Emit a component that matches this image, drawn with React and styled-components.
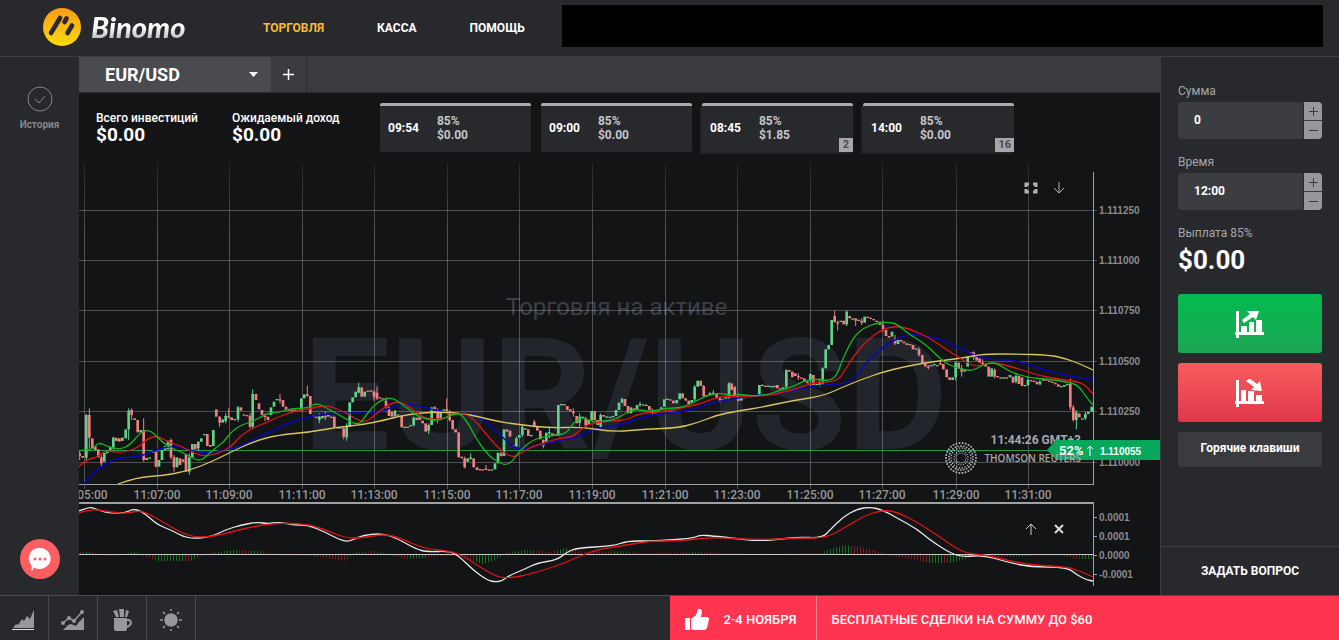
import React, { useState } from "react";
import styled, { createGlobalStyle, css } from "styled-components";

const GlobalStyle = createGlobalStyle`
  * {
    box-sizing: border-box;
  }
  body {
    margin: 0;
    background: #131416;
    color: #fff;
    font-family: Roboto, "Liberation Sans", sans-serif;
    font-size: 12px;
    line-height: 14px;
  }
  button, input {
    margin: 0;
    padding: 0;
    border: 0;
    color: inherit;
    font: inherit;
  }
  button {
    background: none;
    cursor: pointer;
  }
  a {
    color: inherit;
    text-decoration: none;
  }
  svg {
    display: block;
  }
`;

const Page = styled.div`
  min-height: 100vh;
  display: flex;
  flex-direction: column;
`;

const Header = styled.header`
  display: flex;
  align-items: center;
  height: 57px;
  padding: 0 16px 4px 43px;
  background: #28292c;
  border-bottom: 1px solid #3c3d40;
`;

const Logo = styled.a`
  display: flex;
  align-items: center;
  gap: 10px;
  width: 220px;
  padding-top: 2px;
`;

const LogoText = styled.span`
  font-family: Lato, sans-serif;
  font-size: 29px;
  line-height: 36px;
  font-weight: 900;
  font-style: italic;
  background: linear-gradient(#fff 50%, #b4b6ba 85%);
  background-clip: text;
  color: transparent;
`;

const Nav = styled.nav`
  display: flex;
  gap: 53px;
  margin-right: 37px;
  padding-top: 3px;
`;

const NavItem = styled.a`
  font-weight: 700;
  color: ${(props) => (props.$active ? "#f7bd2e" : "#fff")};
`;

const Account = styled.div`
  flex: 1;
  height: 42px;
  background: #000;
`;

const Body = styled.main`
  flex: 1;
  display: flex;
`;

const Sidebar = styled.aside`
  width: 79px;
  display: flex;
  flex-direction: column;
  justify-content: space-between;
  align-items: center;
  padding: 29px 0 16px;
  background: #28292c;
`;

const SideButton = styled.button`
  display: flex;
  flex-direction: column;
  align-items: center;
  gap: 6px;
  font-size: 10px;
  font-weight: 700;
  color: #85868a;
`;

const ChatButton = styled.button`
  width: 40px;
  height: 40px;
  display: grid;
  place-items: center;
  border-radius: 50%;
  background: #fb5f61;
`;

const Center = styled.section`
  flex: 1;
  min-width: 0;
  background: #131416;
`;

const Tabs = styled.div`
  display: flex;
  height: 36px;
  background: #3a3b3e;
  border-bottom: 1px solid #2c2d30;
`;

const AssetTab = styled.button`
  display: flex;
  align-items: center;
  justify-content: space-between;
  width: 192px;
  padding: 0 13px 0 26px;
  background: #4a4b4e;
  font-size: 18px;
  font-weight: 700;
`;

const AddTab = styled.button`
  display: grid;
  place-items: center;
  width: 36px;
  border-right: 1px solid #2a2b2e;
`;

const Summary = styled.div`
  display: flex;
  align-items: flex-start;
  padding: 10px 17px 8px;
`;

const Stat = styled.div`
  width: ${(props) => props.$width}px;
  padding-top: 8px;
`;

const StatLabel = styled.div`
  font-weight: 500;
`;

const StatValue = styled.div`
  font-size: 19px;
  line-height: 20px;
  font-weight: 700;
`;

const Deals = styled.div`
  display: flex;
  gap: 10px;
`;

const Deal = styled.button`
  position: relative;
  display: flex;
  align-items: center;
  gap: 18px;
  width: 151px;
  height: 49px;
  padding: 0 0 2px 8px;
  background: #28292c;
  border-top: 3px solid #a9abaf;
  border-radius: 2px;
  text-align: left;
  font-weight: 700;
  ${(props) =>
    props.$stacked &&
    css`
      box-shadow: -2px 2px 0 #222326;
    `}
`;

const DealInfo = styled.span`
  color: #c4c5c8;
`;

const DealCount = styled.span`
  position: absolute;
  right: 0;
  bottom: 0;
  min-width: 14px;
  padding: 0 3px;
  background: #a6a7aa;
  color: #4a4b4e;
  font-size: 11px;
  text-align: center;
`;

const ChartBox = styled.div`
  position: relative;
`;

const ChartTools = styled.div`
  position: absolute;
  top: ${(props) => props.$top};
  right: 8.6%;
  display: flex;
  gap: 12px;
`;

const ToolButton = styled.button`
  display: grid;
  place-items: center;
  width: 16px;
  height: 16px;
`;

const Panel = styled.aside`
  width: 179px;
  display: flex;
  flex-direction: column;
  background: #28292c;
  border-left: 1px solid #3c3d40;
`;

const Form = styled.form`
  flex: 1;
  display: flex;
  flex-direction: column;
  padding: 27px 17px 0;
`;

const Label = styled.label`
  margin-bottom: 4px;
  color: #a6a7aa;
`;

const Field = styled.div`
  display: flex;
  height: 37px;
  margin-bottom: 16px;
  border-radius: 4px;
  overflow: hidden;
  background: #3c3d41;
`;

const TextInput = styled.input`
  flex: 1;
  min-width: 0;
  padding: 0 16px 2px;
  background: transparent;
  font-weight: 700;
`;

const Steps = styled.div`
  width: 19px;
  display: grid;
  gap: 1px;
  border-left: 1px solid #28292c;
`;

const Step = styled.button`
  display: grid;
  place-items: center;
  background: #97989b;
`;

const Payout = styled.div`
  margin: 2px 0 20px;
  font-size: 26px;
  line-height: 28px;
  font-weight: 700;
`;

const TradeButton = styled.button`
  height: 59px;
  margin-bottom: 10px;
  display: grid;
  place-items: center;
  border-radius: 3px;
  background: ${(props) =>
    props.$up
      ? "linear-gradient(#04bb4e, #1ca653)"
      : "linear-gradient(#f75d5d, #e0364b)"};
`;

const KeysButton = styled.button`
  height: 35px;
  padding-bottom: 4px;
  border-radius: 3px;
  background: #3a3b3e;
  font-weight: 700;
`;

const AskButton = styled.button`
  height: 49px;
  border-top: 1px solid #3c3d40;
  font-weight: 700;
`;

const Footer = styled.footer`
  display: flex;
  justify-content: space-between;
  height: 45px;
  background: #28292c;
  border-top: 1px solid #4a4b4e;
`;

const FooterTools = styled.div`
  display: flex;
`;

const FooterButton = styled.button`
  width: 49px;
  display: grid;
  place-items: center;
  padding-top: 4px;
  border-right: 1px solid #4a4b4e;
`;

const Promo = styled.a`
  flex: 0 0 50%;
  display: flex;
  align-items: center;
  background: #ff344f;
  font-size: 13px;
  font-weight: 500;
`;

const PromoDate = styled.span`
  display: flex;
  align-items: center;
  gap: 15px;
  width: 147px;
  height: 44px;
  padding: 4px 0 0 15px;
  border-right: 1px solid #ff8190;
`;

const PromoText = styled.span`
  padding: 4px 15px 0;
`;

const deals = [
  { time: "09:54", sum: "$0.00" },
  { time: "09:00", sum: "$0.00" },
  { time: "08:45", sum: "$1.85", count: 2 },
  { time: "14:00", sum: "$0.00", count: 16 },
];

const timeMarks = [
  [84, "11:05:00"], [157, "11:07:00"], [229, "11:09:00"], [302, "11:11:00"],
  [374, "11:13:00"], [447, "11:15:00"], [519, "11:17:00"], [592, "11:19:00"],
  [665, "11:21:00"], [737, "11:23:00"], [810, "11:25:00"], [882, "11:27:00"],
  [956, "11:29:00"], [1028, "11:31:00"],
];

const priceMarks = [
  [210, "1.111250"], [260, "1.111000"], [310, "1.110750"],
  [361, "1.110500"], [411, "1.110250"], [462, "1.110000"],
];

const macdMarks = [
  [517, "0.0001"], [536, "0.0001"], [555, "0.0000"], [574, "-0.0001"],
];

// each bar: offset, open, close, in thirds of a unit from the block's origin
const candleBlocks = [
  {
    x: 78,
    y: 370,
    bars:
      "5 250 258,14 258 263,25 263 135,34 135 203,43 205 235,52 230 240,61 238 262,70 262 280,79 275 248,88 250 240,97 240 230,106 232 203,115 203 213,124 205 215,133 213 203,143 205 178,152 178 122,161 120 135,170 145 150,179 150 187,188 187 180,197 180 270,206 270 264,215 264 262,225 243 248,234 247 290,243 290 270,252 270 240,261 240 228,270 238 212,279 210 262,288 262 292,297 292 262,306 265 285,315 268 275,324 253 305,334 305 262,343 262 222,352 222 238,361 235 215,370 215 205,379 195 192,388 192 228,397 225 230,406 228 180,415 118 140,425 140 158,434 158 148,443 153 138,452 138 141,461 142 150,470 150 147,480 148 112,489 112 122,498 133 137,507 135 138,516 138 170,524 170 72,534 72 90,543 100 118,552 120 135,561 137 140,570 140 150,579 135 112,588 110 95,597 90 87,606 88 92,615 90 110,624 110 118,633 118 121,642 119 122,652 122 119,661 120 122,670 122 85,679 85 73,688 73 78,697 78 132,706 137 140,715 140 142,724 150 140,733 145 138,742 138 142,751 140 135,760 140 143,769 140 172,779 172 175,788 175 172,797 175 200,806 202 170,815 170 97,824 97 82,833 82 65,842 68 52,851 52 80,860 80 65,870 62 64,879 64 61,888 65 80,897 68 85,906 82 86,915 85 90,924 92 110,933 110 138,942 125 140,951 138 122,960 133 136",
    wicks:
      "5 240 270,25 132 270,34 115 235,70 255 288,106 200 240,152 115 210,161 115 150,197 145 275,234 240 292,279 205 268,288 255 305,334 250 314,361 215 245,425 140 170,443 130 160,452 115 145,480 108 155,516 130 175,524 58 175,561 130 153,606 72 100,688 47 80,724 130 160,742 125 150,797 170 208,806 160 212,842 38 70,888 60 92,897 50 90,924 82 120,951 120 145",
  },
  {
    x: 400,
    y: 370,
    bars:
      "5 137 172,14 172 170,23 170 173,32 168 165,41 165 143,50 143 150,59 142 150,68 152 160,77 160 185,86 182 165,95 165 112,104 112 122,113 122 150,122 148 122,131 122 118,140 118 125,149 125 150,158 150 178,167 178 187,176 187 262,185 260 265,194 265 292,203 275 265,212 265 262,221 265 292,231 292 300,240 297 300,249 298 301,258 296 299,267 298 300,276 302 298,285 298 280,294 280 248,303 250 258,312 258 178,321 178 185,330 182 200,340 225 230,349 230 205,358 203 195,367 195 172,376 175 178,385 178 198,394 198 195,403 155 170,412 170 182,421 182 208,430 210 228,439 215 188,448 188 186,457 190 195,466 192 197,475 197 105,484 105 102,493 102 105,502 108 120,511 118 125,520 125 130,530 138 160,539 158 140,548 142 140,557 145 165,566 165 150,575 150 123,584 123 150,593 150 165,602 170 135,611 135 140,620 142 139,630 142 140,639 140 138,648 138 120,657 120 98,666 98 87,675 87 108,684 108 130,693 130 112,702 115 120,711 118 105,720 105 102,730 103 106,739 106 104,748 108 120,757 122 130,766 130 125,775 125 122,784 118 112,793 110 88,802 88 86,811 88 92,820 92 100,830 100 90,839 88 70,848 70 85,857 85 92,866 92 103,875 98 90,884 88 50,893 50 32,902 32 48,911 48 78,920 75 78,930 75 68,940 68 71,950 72 85,960 85 92,969 88 90,978 85 82,987 82 40",
    wicks:
      "41 140 170,86 160 192,104 108 128,113 115 160,140 85 130,149 120 155,194 260 295,212 250 270,258 285 300,303 245 260,349 200 235,367 162 200,403 150 172,430 208 235,448 170 205,520 115 140,539 130 170,557 140 172,602 130 175,666 83 100,720 95 110,757 115 133,884 45 95,911 45 82,940 60 75,960 80 98,987 36 90",
  },
  {
    x: 730,
    y: 290,
    bars:
      "5 280 300,14 290 318,25 320 332,34 332 320,43 320 325,52 322 318,61 318 320,70 320 317,79 318 315,88 315 285,97 287 284,106 287 289,115 290 287,124 290 288,133 287 292,142 285 295,151 295 298,160 298 292,169 290 240,178 240 245,187 245 262,196 250 258,205 258 262,214 262 265,223 265 275,232 275 280,241 268 252,250 255 285,260 285 282,269 285 280,278 280 235,287 235 178,296 178 165,305 165 90,314 78 97,323 97 100,332 95 92,341 92 103,350 103 65,359 78 85,368 88 85,377 85 92,386 92 89,395 92 98,404 98 80,413 80 83,422 83 87,431 87 90,440 92 95,450 95 105,459 105 120,468 120 138,477 138 143,486 140 125,495 145 160,504 162 150,513 150 155,522 155 160,531 160 165,540 162 165,549 165 178,558 178 175,567 178 195,577 195 220,586 220 230,595 230 233,604 228 225,613 225 222,622 225 228,631 220 222,640 222 238,650 238 262,659 262 270,668 270 262,677 262 218,686 218 235,695 235 245,704 245 238,713 230 200,722 187 190,731 187 200,740 200 212,749 205 218,758 218 222,767 225 230,776 230 260,785 260 235,794 240 260,803 258 262,812 262 265,821 265 262,830 262 265,840 262 255,849 260 278,858 275 258,867 258 282,876 262 288,885 288 285,894 285 270,903 270 272,912 272 275,921 275 283,930 283 275,940 272 265,949 268 272,958 272 275,967 275 278,976 278 283,985 283 290,994 290 288,1003 290 285,1012 285 282,1021 282 352,1030 352 390,1039 390 367,1048 370 382,1057 385 388,1066 385 372,1075 372 365,1085 365 350",
    wicks:
      "25 310 335,169 238 298,205 250 270,241 250 290,269 265 290,278 232 285,314 62 95,323 92 122,350 62 108,377 85 108,395 85 105,459 92 125,495 135 165,567 172 200,595 225 238,631 212 225,677 215 272,695 225 260,731 184 210,758 208 225,794 235 265,858 250 280,894 260 288,930 270 286,1021 265 360,1030 345 395,1039 360 418,1066 365 390",
  },
];

const averages = [
  {
    color: "#0808b4",
    width: 1.6,
    points:
      "84,484 93,472 105,465 115,458 138,457 151,452 168,446 181,447 195,452 211,453 228,449 241,447 258,437 275,430 291,422 311,416 338,413 355,413 375,413 391,408 401,404 417,405 433,410 457,414 473,414 487,422 500,435 513,447 522,449 533,447 547,443 567,439 580,437 592,429 603,428 627,423 643,417 667,413 690,411 710,403 733,399 750,396 780,393 800,389 820,385 847,384 857,375 867,362 883,347 897,338 913,334 930,337 943,340 963,350 980,358 997,360 1013,360 1030,365 1050,372 1070,376 1093,380",
  },
  {
    color: "#d9c35c",
    points:
      "118,484 138,477 161,476 188,471 211,462 231,452 255,441 278,435 311,432 338,427 361,425 385,420 400,416 420,413 440,412 460,413 480,417 500,422 523,425 550,428 583,427 613,432 647,429 677,428 697,423 717,415 738,411 763,407 790,401 823,396 843,387 863,379 883,372 903,367 930,362 963,358 983,354 1013,354 1050,355 1067,359 1080,364 1093,370",
  },
  {
    color: "#e01414",
    points:
      "78,468 85,460 98,457 105,450 121,453 138,448 148,438 158,436 168,442 181,446 191,452 206,457 221,452 231,447 241,435 255,427 268,422 278,417 295,411 308,409 325,405 341,410 361,422 368,421 378,412 391,403 401,402 410,407 423,418 440,420 460,412 472,417 487,435 500,450 513,458 523,452 533,446 547,442 560,438 573,437 583,427 593,423 610,421 627,420 640,413 663,412 690,406 703,403 717,397 733,396 767,396 783,392 800,388 813,382 837,382 845,370 853,357 867,340 883,329 897,326 910,329 930,338 947,350 963,360 975,367 993,362 1013,367 1037,375 1057,379 1080,382 1087,387 1093,394",
  },
  {
    color: "#12b81c",
    points:
      "78,451 85,450 93,449 98,443 103,444 111,448 121,449 130,445 140,433 146,430 153,432 165,445 181,452 191,457 199,461 206,457 215,448 223,443 231,432 241,425 251,422 261,417 268,413 278,413 288,409 308,408 316,403 325,407 341,416 358,426 365,417 373,406 383,399 393,398 400,403 410,410 420,418 440,421 450,415 460,413 468,423 478,442 490,457 500,463 505,465 512,462 520,450 533,440 543,437 557,435 567,433 573,423 582,417 590,421 600,422 617,419 627,412 637,409 650,412 667,408 680,408 693,403 707,395 720,393 733,396 740,394 750,396 767,395 780,390 793,387 803,381 817,379 830,381 837,375 843,358 853,338 863,328 877,323 888,322 897,324 910,335 927,345 943,362 957,368 970,371 978,368 987,363 997,363 1010,372 1030,378 1047,379 1067,382 1078,385 1087,398 1093,405",
  },
  {
    color: "#e8e8e8",
    points:
      "78,511 85,509 91,507 98,510 108,513 125,513 133,509 141,511 150,518 158,525 171,530 188,539 211,537 225,530 241,525 258,522 268,524 278,522 295,525 308,525 325,532 346,543 358,537 371,534 385,534 398,539 416,549 427,552 450,551 460,557 473,570 487,580 495,582 502,581 510,575 523,570 537,563 557,560 567,552 577,548 613,546 627,541 650,541 673,540 693,538 700,535 713,536 733,538 757,541 783,539 797,537 822,538 830,530 843,517 857,509 870,507 883,510 897,518 917,529 930,540 950,553 963,557 983,555 1007,562 1030,567 1067,567 1077,575 1087,580 1093,581",
  },
  {
    color: "#e01414",
    points:
      "78,513 91,509 105,511 125,514 141,510 158,519 178,531 193,537 211,537 231,532 251,527 275,523 305,524 321,528 345,538 361,538 385,534 400,538 425,549 450,551 463,556 480,567 497,577 510,578 527,575 550,568 567,562 580,556 600,549 627,545 650,541 680,541 713,537 757,540 800,538 825,538 843,529 863,516 883,510 897,512 917,522 937,535 957,549 970,554 987,555 1010,561 1033,565 1067,567 1080,571 1093,577",
  },
];

const histogram = [
  [78, 2], [90, 2], [100, 0], [110, -1], [128, 1], [135, 3], [142, -1],
  [158, -6], [190, -6], [200, -1], [215, 2], [235, 4], [258, 3], [275, 0],
  [310, -1], [345, -6], [352, 1], [370, 3], [390, 0], [405, -4], [425, -3],
  [440, -1], [460, -1], [470, -5], [482, -9], [495, -5], [505, 1], [525, 4],
  [550, 2], [565, 6], [585, 2], [620, 3], [640, 1], [700, 2], [760, 0],
  [820, 1], [830, 5], [845, 9], [860, 7], [880, 2], [890, -1], [910, -4],
  [930, -8], [950, -8], [965, -4], [975, 0], [1000, -2], [1030, -1],
  [1060, 0], [1075, -4], [1092, -4],
];

// stretches of the histogram drawn in green, the rest is red
const greenRanges = [
  [84, 90], [128, 136], [158, 182], [190, 198], [216, 238], [250, 262],
  [348, 362], [378, 392], [410, 426], [476, 502], [508, 530], [556, 566],
  [612, 626], [690, 700], [824, 848], [928, 942], [950, 966], [1008, 1030],
  [1080, 1092],
];

// smooth curve through the middle of each pair of points
const curve = (points) => {
  const p = points.split(" ").map((pair) => pair.split(",").map(Number));
  let d = `M${p[0]}`;
  for (let i = 1; i < p.length - 1; i++) {
    const mx = (p[i][0] + p[i + 1][0]) / 2;
    const my = (p[i][1] + p[i + 1][1]) / 2;
    d += `Q${p[i]} ${mx},${my}`;
  }
  return d + `L${p[p.length - 1]}`;
};

const heightAt = (x) => {
  const i = histogram.findIndex((item) => item[0] > x);
  if (i < 1) return 0;
  const [x0, h0] = histogram[i - 1];
  const [x1, h1] = histogram[i];
  return h0 + ((h1 - h0) * (x - x0)) / (x1 - x0);
};

const Candles = ({ x, y, bars, wicks }) => {
  const list = bars.split(",").map((bar) => bar.split(" ").map(Number));
  const isUp = (u) => {
    const bar = list.find((item) => item[0] === u);
    return bar && bar[2] < bar[1];
  };
  const color = (up) => (up ? "#5fd38b" : "#f07f80");
  return (
    <g transform={`translate(${x} ${y}) scale(${1 / 3})`}>
      {wicks.split(",").map((wick) => {
        const [u, high, low] = wick.split(" ").map(Number);
        return (
          <rect key={u} x={u - 1.5} y={high} width="3" height={low - high} fill={color(isUp(u))} />
        );
      })}
      {list.map(([u, open, close]) => (
        <rect
          key={u}
          x={u - 4}
          y={Math.min(open, close)}
          width="8"
          height={Math.max(4, Math.abs(open - close))}
          fill={color(close < open)}
        />
      ))}
    </g>
  );
};

const Histogram = () => {
  const bars = [];
  for (let x = 80; x < 1092; x += 3) {
    const h = heightAt(x);
    const green = greenRanges.some(([from, to]) => x >= from && x <= to);
    bars.push(
      <rect
        key={x}
        x={x}
        y={h > 0 ? 554 - h : 555}
        width="1"
        height={Math.abs(h)}
        fill={green ? "#146e1c" : "#851a1c"}
      />
    );
  }
  return <g>{bars}</g>;
};

const ReutersMark = () => {
  const dots = [];
  [5, 7, 10, 12, 15].forEach((radius, ring) => {
    const count = 14 + ring * 4;
    for (let i = 0; i < count; i++) {
      const angle = ((i + ring / 2) / count) * Math.PI * 2;
      dots.push(
        <circle
          key={`${ring}-${i}`}
          cx={961 + Math.cos(angle) * radius}
          cy={458 + Math.sin(angle) * radius}
          r={0.6 + ring * 0.1}
        />
      );
    }
  });
  return <g fill="#b4b5b8">{dots}</g>;
};

const Chart = () => (
  <svg viewBox="79 160 1081 435" width="100%" role="img" aria-label="EUR/USD">
    <defs>
      <linearGradient id="fade" gradientUnits="userSpaceOnUse" x1="0" y1="160" x2="0" y2="230">
        <stop offset="0" stopColor="#fff" stopOpacity="0.06" />
        <stop offset="1" stopColor="#fff" stopOpacity="0.26" />
      </linearGradient>
    </defs>
    <g fontFamily="Roboto, sans-serif">
      <text x="506" y="315" fontSize="24" fill="#3b3f47">Торговля на активе</text>
      <text x="303" y="449" fontSize="155" fontWeight="700" fill="#22262c">EUR/USD</text>
    </g>
    {timeMarks.map(([x]) => (
      <rect key={x} x={x} y="163" width="1" height="326" fill="url(#fade)" />
    ))}
    <g fill="#fff" fillOpacity="0.26">
      {priceMarks.map(([y]) => (
        <rect key={y} x="79" y={y} width="1018" height="1" />
      ))}
    </g>
    <rect x="79" y="450" width="970" height="1" fill="#229a48" />
    <Histogram />
    <g fill="#a0a1a3">
      <rect x="79" y="484" width="1015" height="1" />
      <rect x="79" y="502" width="1015" height="2" />
      <rect x="79" y="554" width="1015" height="1" fill="#c8c8c8" />
      <rect x="1093" y="172" width="1" height="313" />
      <rect x="1093" y="502" width="1" height="84" />
      {macdMarks.map(([y]) => (
        <rect key={y} x="1093" y={y} width="4" height="1" />
      ))}
    </g>
    {candleBlocks.map((block) => (
      <Candles key={block.x} {...block} />
    ))}
    {averages.map((item) => (
      <path
        key={item.points}
        d={curve(item.points)}
        fill="none"
        stroke={item.color}
        strokeWidth={item.width || 1.3}
      />
    ))}
    <g fontFamily="Roboto, sans-serif" fontSize="12" fontWeight="500" fill="#97989b" textAnchor="middle">
      {timeMarks.map(([x, text]) => (
        <text key={x} x={x} y="499">{text}</text>
      ))}
    </g>
    <g fontFamily="Liberation Sans, sans-serif" fontSize="10" fontWeight="700" fill="#8a8b8e">
      {priceMarks.concat(macdMarks).map(([y, text]) => (
        <text key={y} x="1099" y={y + 4}>{text}</text>
      ))}
    </g>
    <ReutersMark />
    <text x="1081" y="444" textAnchor="end" fontFamily="Roboto, sans-serif" fontWeight="700" fontSize="12" fill="#a6a7aa">
      11:44:26 GMT+3
    </text>
    <path d="M1047 450l9-10h104v20h-104z" fill="#06a85c" />
    <text x="1081" y="462" textAnchor="end" fontFamily="Open Sans, sans-serif" fontWeight="600" fontSize="10" fill="#a6a7aa">
      THOMSON REUTERS
    </text>
    <g fontWeight="700" fill="#fff">
      <text x="1059" y="455" fontFamily="Roboto, sans-serif" fontSize="13">52%</text>
      <text x="1100" y="455" fontFamily="Liberation Sans, sans-serif" fontSize="10">1.110055</text>
    </g>
    <path d="M1090 456v-10m-3 3l3-3 3 3" fill="none" stroke="#fff" />
  </svg>
);

const LogoMark = () => (
  <svg width="38" height="38" viewBox="0 0 38 38">
    <defs>
      <linearGradient id="gold" x1="0" y1="0" x2="0" y2="1">
        <stop offset="0" stopColor="#fb9a17" />
        <stop offset="1" stopColor="#fddc0b" />
      </linearGradient>
    </defs>
    <circle cx="19" cy="19" r="19" fill="url(#gold)" />
    <g stroke="#28292c" strokeWidth="4.6" strokeLinecap="round">
      <path d="M8 25L17 10" />
      <path d="M21.500 14L23.500 10.500" />
      <path d="M24.500 25L29 17.500" />
    </g>
  </svg>
);

const TradeIcon = ({ up }) => (
  <svg width="30" height="28" viewBox="0 0 30 28" fill="#fff">
    <path d="M1 1h3v21h25v3H4v3H1v-3H0v-3h1z" />
    {up ? (
      <>
        <path d="M6 16h6v6H6zM14 12h5v10h-5zM21 10h6v12h-6z" />
        <path d="M7 10l8-6-3-3h12l-3 9-3-3-9 6z" />
      </>
    ) : (
      <>
        <path d="M6 11h5v11H6zM13 12h6v10h-6zM21 16h6v6h-6z" />
        <path d="M11 2l3-3 8 6 3-3 2 10-11-1 3-3z" />
      </>
    )}
  </svg>
);

const Spinner = ({ id, label, value, onChange, onStep }) => (
  <>
    <Label htmlFor={id}>{label}</Label>
    <Field>
      <TextInput id={id} value={value} onChange={(e) => onChange(e.target.value)} />
      <Steps>
        <Step type="button" aria-label={`${label} +`} onClick={() => onStep(1)}>
          <svg width="9" height="9" stroke="#3a3b3e">
            <path d="M0 4.5h9M4.5 0v9" />
          </svg>
        </Step>
        <Step type="button" aria-label={`${label} −`} onClick={() => onStep(-1)}>
          <svg width="9" height="9" stroke="#3a3b3e">
            <path d="M0 4.5h9" />
          </svg>
        </Step>
      </Steps>
    </Field>
  </>
);

export default function App() {
  const [amount, setAmount] = useState("0");
  const [time, setTime] = useState("12:00");

  const stepAmount = (delta) => {
    setAmount(String(Math.max(0, (Number(amount) || 0) + delta)));
  };

  const stepTime = (delta) => {
    const [h, m] = time.split(":").map(Number);
    const total = ((h || 0) * 60 + (m || 0) + delta + 1440) % 1440;
    const pad = (n) => String(n).padStart(2, "0");
    setTime(`${pad(Math.floor(total / 60))}:${pad(total % 60)}`);
  };

  return (
    <Page>
      <GlobalStyle />
      <Header>
        <Logo href="#">
          <LogoMark />
          <LogoText>Binomo</LogoText>
        </Logo>
        <Nav>
          <NavItem href="#trade" $active>ТОРГОВЛЯ</NavItem>
          <NavItem href="#cash">КАССА</NavItem>
          <NavItem href="#help">ПОМОЩЬ</NavItem>
        </Nav>
        <Account />
      </Header>

      <Body>
        <Sidebar>
          <SideButton>
            <svg width="26" height="26" fill="none" stroke="#85868a">
              <circle cx="13" cy="13" r="12" />
              <path d="M8 13l4 4 6-7" />
            </svg>
            История
          </SideButton>
          <ChatButton aria-label="Чат">
            <svg width="24" height="24" viewBox="0 0 24 24">
              <path d="M12 1a11 10.500 0 1 1-6 19.500L4 24c-1 0 0-3-.5-5.500A10.500 10.500 0 0 1 12 1z" fill="#fff" />
              <g fill="#fb5f61">
                <circle cx="7" cy="12" r="1.500" />
                <circle cx="12" cy="12" r="1.500" />
                <circle cx="17" cy="12" r="1.500" />
              </g>
            </svg>
          </ChatButton>
        </Sidebar>

        <Center>
          <Tabs>
            <AssetTab>
              EUR/USD
              <svg width="9" height="5" fill="#fff">
                <path d="M0 0h9L4.500 5z" />
              </svg>
            </AssetTab>
            <AddTab aria-label="Добавить">
              <svg width="11" height="11" stroke="#fff" strokeWidth="1.500">
                <path d="M0 5.500h11M5.500 0v11" />
              </svg>
            </AddTab>
          </Tabs>
          <Summary>
            <Stat $width={136}>
              <StatLabel>Всего инвестиций</StatLabel>
              <StatValue>$0.00</StatValue>
            </Stat>
            <Stat $width={148}>
              <StatLabel>Ожидаемый доход</StatLabel>
              <StatValue>$0.00</StatValue>
            </Stat>
            <Deals>
              {deals.map((deal) => (
                <Deal key={deal.time} $stacked={deal.count}>
                  {deal.time}
                  <DealInfo>
                    85%
                    <br />
                    {deal.sum}
                  </DealInfo>
                  {deal.count && <DealCount>{deal.count}</DealCount>}
                </Deal>
              ))}
            </Deals>
          </Summary>
          <ChartBox>
            <Chart />
            <ChartTools $top="20px">
              <ToolButton aria-label="Во весь экран">
                <svg width="14" height="12" fill="none" stroke="#b0b1b4" strokeWidth="3">
                  <path d="M5 2H2v3M9 2h3v3M5 10H2V7M9 10h3V7" />
                </svg>
              </ToolButton>
              <ToolButton aria-label="Вниз">
                <svg width="12" height="12" fill="none" stroke="#b0b1b4">
                  <path d="M6 0v11M1 6l5 5 5-5" />
                </svg>
              </ToolButton>
            </ChartTools>
            <ChartTools $top="83%">
              <ToolButton aria-label="Вверх">
                <svg width="12" height="12" fill="none" stroke="#d0d0d2">
                  <path d="M6 12V1M1 6l5-5 5 5" />
                </svg>
              </ToolButton>
              <ToolButton aria-label="Закрыть">
                <svg width="10" height="10" stroke="#d8d8da" strokeWidth="2">
                  <path d="M1 1l8 8M9 1L1 9" />
                </svg>
              </ToolButton>
            </ChartTools>
          </ChartBox>
        </Center>

        <Panel>
          <Form onSubmit={(e) => e.preventDefault()}>
            <Spinner id="amount" label="Сумма" value={amount} onChange={setAmount} onStep={stepAmount} />
            <Spinner id="time" label="Время" value={time} onChange={setTime} onStep={stepTime} />
            <Label as="div">Выплата 85%</Label>
            <Payout>$0.00</Payout>
            <TradeButton type="button" aria-label="Выше" $up>
              <TradeIcon up />
            </TradeButton>
            <TradeButton type="button" aria-label="Ниже">
              <TradeIcon />
            </TradeButton>
            <KeysButton type="button">Горячие клавиши</KeysButton>
          </Form>
          <AskButton>ЗАДАТЬ ВОПРОС</AskButton>
        </Panel>
      </Body>

      <Footer>
        <FooterTools>
          <FooterButton aria-label="Тип графика">
            <svg width="24" height="22" viewBox="0 0 24 22" fill="#97989b">
              <path d="M1 19l3-4 2 1 4-6 2 2 3-5 3 3 3-7 1-2v18z" />
              <path d="M0 20h22v1H0z" fill="#e0e0e0" />
            </svg>
          </FooterButton>
          <FooterButton aria-label="Индикаторы">
            <svg width="24" height="22" viewBox="0 0 24 22" fill="#97989b">
              <path d="M2 21l5-5 3-1 5 2 3-4 5-5v13z" />
              <path d="M2 14l6-5 5 3 8-9" fill="none" stroke="#97989b" strokeWidth="1.500" />
              <circle cx="2" cy="14" r="2" />
              <circle cx="8" cy="9" r="2" />
              <circle cx="13" cy="12" r="2" />
              <circle cx="21" cy="3" r="2" />
            </svg>
          </FooterButton>
          <FooterButton aria-label="Инструменты">
            <svg width="20" height="24" viewBox="0 0 20 24" fill="#97989b">
              <path d="M2 10h13v11l-1 2H3l-1-2zM1 3l4-1 2 7H4zM7 1h5v8H8zM14 2l3 1-2 6h-2z" />
              <path d="M15 12h2q2 1 2 3t-4 4" fill="none" stroke="#97989b" strokeWidth="2" />
            </svg>
          </FooterButton>
          <FooterButton aria-label="Тема">
            <svg width="24" height="24" viewBox="0 0 24 24" fill="#97989b" stroke="#97989b" strokeWidth="1.500">
              <circle cx="12" cy="12" r="6" />
              <path d="M12 1v2M12 21v2M1 12h3M20 12h3M4 4l2 2M18 18l2 2M4 20l2-2M18 6l2-2" />
            </svg>
          </FooterButton>
        </FooterTools>
        <Promo href="#promo">
          <PromoDate>
            <svg width="24" height="22" viewBox="0 0 24 22" fill="#fff">
              <path d="M0 9h5v12H0zM6 10l5-4 2-6q4-1 4 3l-1 5h6q2 0 2 2l-2 9q-1 2-3 2H9l-3-1z" />
            </svg>
            2-4 НОЯБРЯ
          </PromoDate>
          <PromoText>БЕСПЛАТНЫЕ СДЕЛКИ НА СУММУ ДО $60</PromoText>
        </Promo>
      </Footer>
    </Page>
  );
}
